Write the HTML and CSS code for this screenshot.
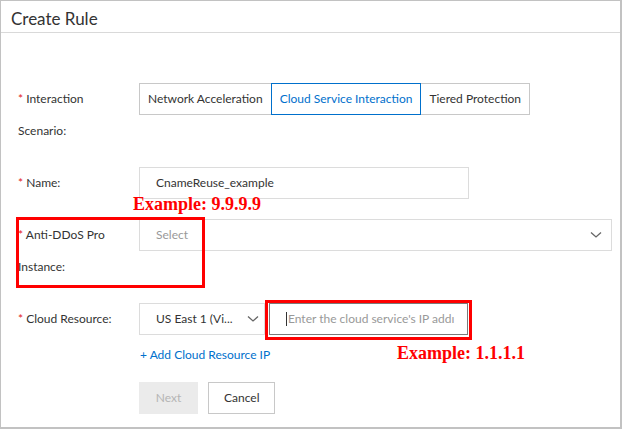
FILE: index.html
```html
<!DOCTYPE html>
<html lang="en">
    <head>
        <meta charset="UTF-8" />
        <link rel="stylesheet" href="styles.css">
        <title>Create Rule</title>
    </head>
    <body>
        <div class="dialog">
            <div class="dialog-head">Create Rule</div>

            <div class="form">
                <div class="row">
                    <div class="label required">Interaction Scenario:</div>
                    <div class="tabs">
                        <div class="tab">Network Acceleration</div>
                        <div class="tab active">Cloud Service Interaction</div>
                        <div class="tab">Tiered Protection</div>
                    </div>
                </div>

                <div class="row">
                    <div class="label required">Name:</div>
                    <div class="input name-input">CnameReuse_example</div>
                </div>

                <div class="row">
                    <div class="label required">Anti-DDoS Pro Instance:</div>
                    <div class="input select wide">
                        <span class="placeholder">Select</span>
                        <svg class="arrow" width="12" height="8" viewBox="0 0 12 8"><path d="M1 1.5 L6 6 L11 1.5" fill="none" stroke="#666" stroke-width="1.3"/></svg>
                    </div>
                </div>

                <div class="row">
                    <div class="label required">Cloud Resource:</div>
                    <div class="input select region">
                        <span>US East 1 (Vi...</span>
                        <svg class="arrow" width="12" height="8" viewBox="0 0 12 8"><path d="M1 1.5 L6 6 L11 1.5" fill="none" stroke="#666" stroke-width="1.3"/></svg>
                    </div>
                    <div class="input ip-input"><span class="caret"></span><span class="placeholder">Enter the cloud service's IP addı</span></div>
                </div>

                <div class="add-link">+ Add Cloud Resource IP</div>

                <div class="actions">
                    <div class="btn disabled">Next</div>
                    <div class="btn">Cancel</div>
                </div>
            </div>

            <div class="note note-top">Example: 9.9.9.9</div>
            <div class="note note-bottom">Example: 1.1.1.1</div>
            <div class="mark mark-instance"></div>
            <div class="mark mark-ip"></div>
        </div>
    </body>
</html>
```

FILE: styles.css
```css
@charset "utf-8";

* {
    margin: 0;
    padding: 0;
    box-sizing: border-box;
}

body {
    font-family: Lato, "Open Sans", sans-serif;
    font-size: 12px;
    color: #333;
    background: #fff;
}

.dialog {
    position: relative;
    width: 622px;
    height: 429px;
    border: 1px solid #c2c2c2;
    border-right-width: 2px;
    border-bottom-width: 2px;
    overflow: hidden;
}

.dialog-head {
    height: 32px;
    padding: 3px 0 0 10px;
    border-bottom: 1px solid #d9d9d9;
    font-size: 17px;
    line-height: 30px;
    color: #333;
}

.form {
    padding: 50px 0 0 17px;
}

.row {
    display: flex;
    align-items: flex-start;
    margin-bottom: 20px;
}

.label {
    width: 121px;
    padding-right: 14px;
    line-height: 32px;
    flex-shrink: 0;
}

.required::before {
    content: "* ";
    color: #e2231a;
}

.tabs {
    display: flex;
}

.tab {
    height: 32px;
    line-height: 30px;
    padding: 0 8px;
    border: 1px solid #c8c8c8;
    margin-left: -1px;
    background: #fff;
}

.tab:first-child {
    margin-left: 0;
}

.tab.active {
    position: relative;
    border-color: #0070cc;
    color: #0070cc;
}

.input {
    height: 32px;
    line-height: 30px;
    padding-left: 16px;
    border: 1px solid #dcdcdc;
    background: #fff;
}

.name-input {
    width: 330px;
}

.select {
    display: flex;
    align-items: center;
    justify-content: space-between;
    padding-right: 9px;
}

.wide {
    width: 473px;
}

.region {
    width: 126px;
    padding-right: 5px;
}

.placeholder {
    color: #999;
}

.ip-input {
    width: 199px;
    margin-left: 4px;
    border-color: #7a7a7a;
    display: flex;
    align-items: center;
    white-space: nowrap;
    overflow: hidden;
}

.caret {
    display: inline-block;
    width: 1px;
    height: 14px;
    background: #333;
    margin-right: 1px;
}

.add-link {
    margin: -10px 0 0 122px;
    line-height: 20px;
    color: #0070cc;
}

.actions {
    display: flex;
    gap: 10px;
    margin: 17px 0 0 121px;
}

.btn {
    height: 32px;
    line-height: 30px;
    padding: 0 15px;
    border: 1px solid #c8c8c8;
    background: #fff;
    color: #333;
}

.btn.disabled {
    width: 59px;
    text-align: center;
    background: #ebebeb;
    border-color: #ebebeb;
    color: #b5b5b5;
}

.note {
    position: absolute;
    font-family: "Liberation Serif", serif;
    font-weight: bold;
    font-size: 18px;
    color: #f00;
}

.note-top {
    left: 132px;
    top: 193px;
}

.note-bottom {
    left: 396px;
    top: 342px;
}

.mark {
    position: absolute;
    border: 3px solid #f00;
}

.mark-instance {
    left: 15px;
    top: 216px;
    width: 189px;
    height: 71px;
}

.mark-ip {
    left: 264px;
    top: 299px;
    width: 207px;
    height: 40px;
}
```
